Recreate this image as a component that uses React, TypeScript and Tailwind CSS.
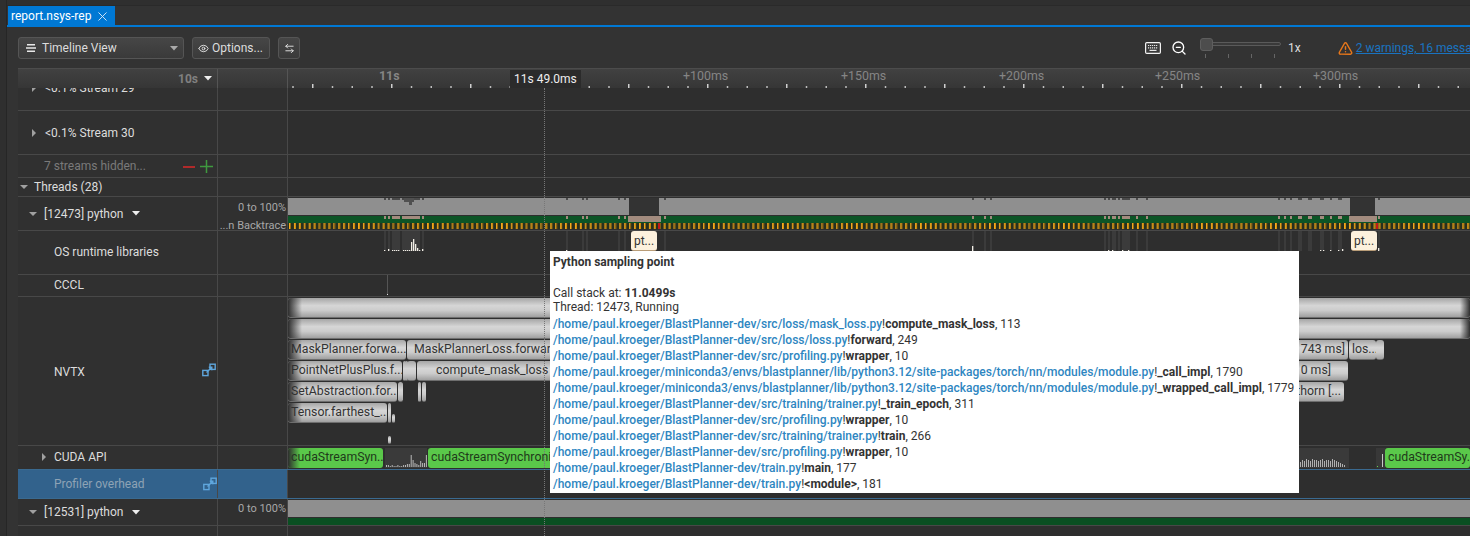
import React from "react";
import { ArrowLeftRight, Eye, TriangleAlert, X, ZoomOut } from "lucide-react";

const CW = 1182;

const marks = [
  [384, 2], [388, 2], [392, 8], [402, 18], [422, 2],
  [566, 2], [582, 2], [586, 2], [618, 2], [624, 2], [664, 2], [972, 2],
  [984, 2], [990, 2], [1104, 2], [1108, 2], [1112, 4], [1118, 2], [1122, 8], [1136, 2], [1146, 2],
  [1278, 2], [1284, 2], [1290, 2], [1298, 4], [1308, 4], [1320, 4], [1330, 2], [1338, 4], [1378, 2],
];
const notches = [[629, 30], [1350, 25]];

type Bar = {
  x: number;
  w: number;
  y: number;
  h?: number;
  text: string;
  fadeL?: boolean;
  fadeR?: boolean;
  indent?: number;
  right?: boolean;
  rightPad?: number;
};

const nvtxBars: Bar[] = [
  { x: 288, w: 1182, y: 1, text: "", fadeL: true, fadeR: true },
  { x: 288, w: 1182, y: 22, text: "", fadeL: true, fadeR: true },
  { x: 288, w: 118, y: 43, text: "MaskPlanner.forwa...", fadeL: true },
  { x: 407, w: 150, y: 43, text: "MaskPlannerLoss.forward", indent: 7 },
  { x: 1250, w: 98, y: 43, text: "743 ms]", right: true },
  { x: 1349, w: 27, y: 43, text: "los..." },
  { x: 1376, w: 8, y: 43, text: "" },
  { x: 288, w: 114, y: 64, text: "PointNetPlusPlus.f...", fadeL: true },
  { x: 403, w: 1, y: 64, text: "" },
  { x: 405, w: 1, y: 64, text: "" },
  { x: 407, w: 9, y: 64, text: "" },
  { x: 417, w: 136, y: 64, text: "compute_mask_loss", indent: 19 },
  { x: 1250, w: 98, y: 64, text: "0 ms]", right: true, rightPad: 17 },
  { x: 288, w: 109, y: 85, text: "SetAbstraction.for...", fadeL: true },
  { x: 398, w: 5, y: 85, text: "" },
  { x: 418, w: 3, y: 85, text: "" },
  { x: 422, w: 4, y: 85, text: "" },
  { x: 1250, w: 94, y: 85, text: "thorn [...", right: true },
  { x: 288, w: 99, y: 106, text: "Tensor.farthest_...", fadeL: true },
  { x: 388, w: 3, y: 106, text: "" },
  { x: 392, w: 3, y: 117, h: 9, text: "" },
  { x: 388, w: 3, y: 139, h: 8, text: "" },
];

const callStack = [
  ["/home/paul.kroeger/BlastPlanner-dev/src/loss/mask_loss.py", "compute_mask_loss", "113"],
  ["/home/paul.kroeger/BlastPlanner-dev/src/loss/loss.py", "forward", "249"],
  ["/home/paul.kroeger/BlastPlanner-dev/src/profiling.py", "wrapper", "10"],
  ["/home/paul.kroeger/miniconda3/envs/blastplanner/lib/python3.12/site-packages/torch/nn/modules/module.py", "_call_impl", "1790"],
  ["/home/paul.kroeger/miniconda3/envs/blastplanner/lib/python3.12/site-packages/torch/nn/modules/module.py", "_wrapped_call_impl", "1779"],
  ["/home/paul.kroeger/BlastPlanner-dev/src/training/trainer.py", "_train_epoch", "311"],
  ["/home/paul.kroeger/BlastPlanner-dev/src/profiling.py", "wrapper", "10"],
  ["/home/paul.kroeger/BlastPlanner-dev/src/training/trainer.py", "train", "266"],
  ["/home/paul.kroeger/BlastPlanner-dev/src/profiling.py", "wrapper", "10"],
  ["/home/paul.kroeger/BlastPlanner-dev/train.py", "main", "177"],
  ["/home/paul.kroeger/BlastPlanner-dev/train.py", "<module>", "181"],
];

const timeLabels = [
  { x: 379, t: "11s", bold: true },
  { x: 683, t: "+100ms" },
  { x: 841, t: "+150ms" },
  { x: 999, t: "+200ms" },
  { x: 1155, t: "+250ms" },
  { x: 1313, t: "+300ms" },
];

function Tri({ open, className }: { open?: boolean; className: string }) {
  return (
    <svg width="8" height="8" viewBox="0 0 8 8" className={className}>
      {open ? <path d="M0 2h8L4 6z" fill="#a0a0a0" /> : <path d="M2 0l4 4-4 4z" fill="#a0a0a0" />}
    </svg>
  );
}

function Caret() {
  return (
    <svg width="8" height="5" viewBox="0 0 8 5" className="shrink-0">
      <path d="M0 0h8L4 4.5z" fill="#eeeeee" />
    </svg>
  );
}

function ExpandIcon({ className }: { className: string }) {
  return (
    <svg width="14" height="14" viewBox="0 0 14 14" fill="none" stroke="#5fa6dc" strokeWidth="1.4" className={className}>
      <rect x="0.8" y="7.4" width="5.2" height="5.2" />
      <rect x="8" y="1.2" width="5.2" height="5.2" />
      <path d="M4.5 9.5L9.5 4.5M6.8 4.2h3v3" />
    </svg>
  );
}

function KeyboardIcon() {
  return (
    <svg width="16" height="12" viewBox="0 0 16 12" className="ml-[845px] shrink-0">
      <rect x="0.6" y="0.6" width="14.8" height="10.8" rx="1.2" fill="#3a3a3a" stroke="#f2f2f2" strokeWidth="1.2" />
      <path d="M3 3.5h10M3 5.8h10" stroke="#e8e8e8" strokeWidth="1.2" strokeDasharray="1.2 0.8" />
      <path d="M4.5 8.4h7" stroke="#e8e8e8" strokeWidth="1.2" />
    </svg>
  );
}

function Row({
  h,
  label,
  mid,
  canvas,
  selected,
  className = "",
}: {
  h: string;
  label?: React.ReactNode;
  mid?: React.ReactNode;
  canvas?: React.ReactNode;
  selected?: boolean;
  className?: string;
}) {
  return (
    <div className={`grid grid-cols-[200px_70px_1fr] grid-rows-[minmax(0,1fr)] shrink-0 border-b border-[#484848] ${h} ${className}`}>
      <div className={`relative flex items-center border-r border-[#484848] min-w-0 ${selected ? "bg-[#32628c]" : "bg-[#303030]"}`}>
        {label}
      </div>
      <div className={`relative flex flex-col items-end border-r border-[#484848] text-[11px] leading-[12px] text-[#a8a8a8] ${selected ? "bg-[#32628c]" : "bg-[#303030]"}`}>
        {mid}
      </div>
      <div className="relative bg-[#2e2e2e] overflow-hidden">{canvas}</div>
    </div>
  );
}

function ThreadCanvas({ withMarks }: { withMarks?: boolean }) {
  const ticks: number[] = [];
  for (let x = 289; x < 1470; x += 4.93) ticks.push(x);
  return (
    <svg width={CW} height="33" viewBox="288 0 1182 33" className="block">
      <rect x="288" y="1" width="1182" height="17" fill="#8f8f8f" />
      <rect x="288" y="19" width="1182" height="7" fill={withMarks ? "#0c5526" : "#0a4f22"} />
      {withMarks &&
        marks.map(([x, w]) => (
          <g key={x}>
            <rect x={x} y="1" width={w} height="2" fill="#4a4a4a" />
            <rect x={x} y="19" width={w} height="3" fill="#a28b7e" />
          </g>
        ))}
      {withMarks && (
        <>
          <path d="M404 1h10v4h-2v3h-3v-3h-5z" fill="#505050" />
          <rect x="402" y="21" width="18" height="1" fill="#a28b7e" />
        </>
      )}
      {withMarks &&
        notches.map(([x, w]) => (
          <g key={x}>
            <rect x={x} y="1" width={w} height="17" fill="#333333" />
            <rect x={x - 1} y="19" width={w + 3} height="6" fill="#a28b7e" />
          </g>
        ))}
      {withMarks && <rect x="288" y="26" width="1182" height="6" fill="#27301f" />}
      {withMarks &&
        ticks.map((x, i) => (
          <g key={i}>
            <rect x={x} y="26" width="1" height="6" fill="#f7ad20" />
            <rect x={x + 1} y="26" width="1" height="6" fill={i % 3 === 0 ? "#9c6c12" : "#d8930f"} />
          </g>
        ))}
      {withMarks && <rect x="658" y="26" width="2" height="6" fill="#c01818" />}
      {withMarks && <rect x="1376" y="26" width="2" height="6" fill="#c01818" />}
    </svg>
  );
}

function OsCanvas() {
  const spikes = [
    [384, 1], [388, 2], [392, 1], [394, 1], [396, 1], [398, 1], [403, 1], [405, 1], [407, 1], [409, 1],
    [411, 9], [413, 12], [415, 7], [417, 3], [419, 1], [422, 2], [566, 1], [1108, 1], [1112, 1], [1122, 1], [1128, 1],
    [972, 5], [1378, 3], [1330, 1], [1320, 1], [1323, 1], [1338, 1], [1342, 2],
  ];
  return (
    <>
      <svg width={CW} height="20" viewBox="288 0 1182 20" className="block">
        {marks.map(([x, w]) => (
          <rect key={x} x={x} y="0" width={w} height="20" fill="#3b3b3b" />
        ))}
        <rect x="402" y="0" width="18" height="20" fill="#3b3b3b" />
        {spikes.map(([x, h]) => (
          <rect key={x} x={x} y={20 - h} width="1.3" height={h} fill="#f2eee6" />
        ))}
      </svg>
      {[343, 1063].map((x) => (
        <div
          key={x}
          className="absolute top-0 w-[26px] h-[20px] rounded-[3px] bg-[#fdf1dd] text-[12px] leading-[20px] text-center text-[#333] border-b border-[#b99d78]"
          style={{ left: x }}
        >
          pt...
        </div>
      ))}
    </>
  );
}

function NvtxCanvas() {
  return (
    <>
      {nvtxBars.map((b, i) => (
        <div
          key={i}
          className="absolute h-[20px] rounded-[3px] overflow-hidden border-b border-[#6e6e6e] bg-[linear-gradient(180deg,#a6a6a6,#d6d6d6_40%,#cccccc_65%,#a0a0a0)] text-[12.3px] leading-[19px] text-[#333] whitespace-nowrap"
          style={{
            left: b.x - 288,
            top: b.y,
            width: b.w,
            height: b.h,
            paddingLeft: b.right ? 0 : b.indent ?? 3,
            paddingRight: b.right ? b.rightPad ?? 3 : 0,
            textAlign: b.right ? "right" : "left",
          }}
        >
          {b.text}
          {b.fadeL && <div className="absolute left-0 top-0 bottom-0 w-[14px] bg-gradient-to-r from-[#2e2e2e] to-transparent" />}
          {b.fadeR && <div className="absolute right-0 top-0 bottom-0 w-[10px] bg-gradient-to-l from-[#2e2e2e] to-transparent" />}
        </div>
      ))}
    </>
  );
}

function CudaCanvas() {
  const left = [2, 2, 1, 2, 1, 1, 2, 1, 1, 2, 2, 3, 3, 12, 7, 4, 3, 2, 6, 4, 4, 12];
  const right = [5, 7, 6, 8, 7, 6, 8, 7, 7, 6, 7, 8, 6, 7, 7, 6, 8, 7, 6, 5, 4, 3, 2];
  const green = [
    { x: 288, w: 95, t: "cudaStreamSyn..." },
    { x: 428, w: 130, t: "cudaStreamSynchroni" },
    { x: 1385, w: 85, t: "cudaStreamSy.." },
  ];
  return (
    <>
      <svg width={CW} height="23" viewBox="288 0 1182 23" className="block absolute left-0 top-0">
        <rect x="385" y="2" width="42" height="20" fill="#3a3a3a" />
        {left.map((h, i) => (
          <rect key={i} x={386 + i * 1.9} y={21 - h} width="1" height={h} fill="#b8b8b8" />
        ))}
        <rect x="1299" y="2" width="50" height="20" fill="#3a3a3a" />
        {right.map((h, i) => (
          <rect key={i} x={1300 + i * 2} y={21 - h} width="1" height={h} fill="#b0b0b0" />
        ))}
        <rect x="1376" y="2" width="9" height="20" fill="#383838" />
        <rect x="1382" y="8" width="1" height="13" fill="#c8c8c8" />
        <rect x="1377" y="20" width="1" height="1" fill="#62d24e" />
      </svg>
      {green.map((g) => (
        <div
          key={g.x}
          className="absolute top-[2px] h-[20px] rounded-[3px] overflow-hidden pl-[3px] bg-[#5ac84a] text-[12.3px] leading-[19px] text-[#1f3a1a] whitespace-nowrap"
          style={{ left: g.x - 288, width: g.w }}
        >
          {g.t}
          {g.x === 288 && <div className="absolute left-0 top-0 bottom-0 w-[12px] bg-gradient-to-r from-[#2e2e2e] to-transparent" />}
        </div>
      ))}
    </>
  );
}

function Ruler() {
  const ticks = [];
  for (let i = 0; i < 60; i++) {
    const x = 292.25 + i * 19.75;
    const big = (i - 1) % 4 === 0;
    ticks.push(<rect key={i} x={x} y={big ? 15 : 17} width="1.5" height={big ? 5 : 3} fill={big ? "#cfcfcf" : "#bdbdbd"} />);
  }
  return (
    <svg width={CW} height="20" viewBox="288 0 1182 20" className="absolute left-0 top-0">
      {ticks}
    </svg>
  );
}

function Tooltip() {
  return (
    <div className="absolute left-[550px] top-[251px] w-[749px] h-[242px] bg-white pt-[4px] px-[3px] text-[12px] leading-[15px] text-[#333] whitespace-nowrap overflow-hidden">
      <div className="font-bold">Python sampling point</div>
      <div className="h-[16px]" />
      <div>
        Call stack at: <b>11.0499s</b>
      </div>
      <div className="-mt-px mb-px">Thread: 12473, Running</div>
      {callStack.map((f, i) => (
        <div key={i} className="leading-[16px]">
          <span className="text-[#2e86c1] font-medium">{f[0]}</span>!<b>{f[1]}</b>, {f[2]}
        </div>
      ))}
    </div>
  );
}

export default function App() {
  return (
    <div className="relative w-[1470px] h-[536px] overflow-hidden flex bg-[#333333] font-['Roboto',sans-serif] text-[12px] text-[#dddddd]">
      <div className="w-[7px] shrink-0 bg-[#2f2f2f] border-r border-[#262626]" />
      <div className="flex-1 min-w-0 flex flex-col">
        <div className="h-[6px] shrink-0 border-b border-[#2a2a2a] bg-[#2f2f2f]" />
        <div className="h-[21px] shrink-0 border-b-2 border-[#0078d4] pl-px flex">
          <div className="w-[107px] h-[20px] bg-[#0078d4] flex items-center pl-[3px] gap-[4px] text-white">
            report.nsys-rep
            <X size={15} strokeWidth={1.5} className="text-[#d9e9f7]" />
          </div>
        </div>
        <div className="h-[41px] shrink-0 flex items-center pt-[1px] pl-[11px] whitespace-nowrap overflow-hidden">
          <div className="w-[166px] h-[22px] shrink-0 flex items-center pl-[7px] pr-[5px] rounded-[3px] border border-[#555] bg-gradient-to-b from-[#464646] to-[#3a3a3a]">
            <svg width="10" height="8" viewBox="0 0 10 8" className="mr-[6px]">
              <path d="M1 0h8v1.5H1zM0 3.2h10v1.5H0zM1 6.4h8V8H1z" fill="#e8e8e8" />
            </svg>
            Timeline View
            <svg width="8" height="5" viewBox="0 0 8 5" className="ml-auto">
              <path d="M0 0h8L4 4.5z" fill="#aaaaaa" />
            </svg>
          </div>
          <div className="ml-[8px] w-[78px] h-[22px] shrink-0 flex items-center pl-[5px] gap-[3px] rounded-[3px] border border-[#555] bg-gradient-to-b from-[#464646] to-[#3a3a3a]">
            <Eye size={11} strokeWidth={2} className="text-[#e8e8e8]" />
            Options...
          </div>
          <div className="ml-[8px] w-[22px] h-[22px] shrink-0 flex items-center justify-center rounded-[3px] border border-[#555] bg-gradient-to-b from-[#464646] to-[#3a3a3a]">
            <ArrowLeftRight size={11} strokeWidth={2} className="text-[#e8e8e8]" />
          </div>
          <KeyboardIcon />
          <ZoomOut size={16} strokeWidth={2} className="ml-[10px] shrink-0 text-white" />
          <div className="ml-[13px] w-[81px] h-[24px] shrink-0 relative">
            <div className="absolute left-[10px] top-[6px] w-[71px] h-[4px] rounded-full border border-[#5a5a5a] bg-[#3a3a3a]" />
            <div className="absolute left-0 top-[2px] w-[13px] h-[13px] rounded-[3px] bg-[#4d4d4d] border border-[#5e5e5e]" />
            <div className="absolute left-[5px] right-0 top-[18px] h-[4px] flex justify-between pr-[6px]">
              <span className="w-px bg-[#666]" />
              <span className="w-px bg-[#666]" />
              <span className="w-px bg-[#666]" />
              <span className="w-px bg-[#666]" />
            </div>
          </div>
          <span className="ml-[7px] shrink-0">1x</span>
          <TriangleAlert size={15} strokeWidth={2.4} className="ml-[37px] shrink-0 text-[#e8771a]" />
          <a className="ml-[3px] shrink-0 text-[#1a73c0] underline">2 warnings, 16 messages</a>
        </div>

        <div className="flex-1 min-h-0 ml-[11px] flex flex-col overflow-hidden relative">
          <div className="h-[20px] shrink-0 grid grid-cols-[200px_70px_1fr] bg-gradient-to-b from-[#414141] to-[#363636] border-t border-[#4c4c4c]">
            <div className="border-r border-[#555] flex items-center justify-end pr-[5px] gap-[6px] text-[#808080] font-bold">
              10s
              <Caret />
            </div>
            <div className="border-r border-[#555]" />
            <div className="relative">
              <Ruler />
              {timeLabels.map((l) => (
                <span
                  key={l.x}
                  className={`absolute top-[-1px] text-[12.4px] leading-[16px] text-[#858585] ${l.bold ? "font-bold" : ""}`}
                  style={{ left: l.x - 288 }}
                >
                  {l.t}
                </span>
              ))}
              <span className="absolute left-[222px] top-[1px] h-[18px] px-[4px] bg-[#2b2b2b] text-[#eeeeee] leading-[18px]">11s 49.0ms</span>
            </div>
          </div>

          <div className="flex-1 min-h-0 flex flex-col overflow-hidden relative">
            <Row
              h="h-[45px] -mt-[22px]"
              label={
                <>
                  <Tri className="ml-[12px] mr-[7px]" />
                  &lt;0.1% Stream 29
                </>
              }
            />
            <Row
              h="h-[44px]"
              label={
                <>
                  <Tri className="ml-[12px] mr-[7px]" />
                  &lt;0.1% Stream 30
                </>
              }
            />
            <Row
              h="h-[23px]"
              label={
                <>
                  <span className="ml-[26px] text-[#7a7a7a]">7 streams hidden...</span>
                  <span className="absolute left-[165px] top-[11px] w-[12px] h-[1.5px] bg-[#b02a2a]" />
                  <svg width="13" height="13" viewBox="0 0 13 13" className="absolute left-[182px] top-[5px]">
                    <path d="M6.5 0v13M0 6.5h13" stroke="#3f9a3f" strokeWidth="1.5" />
                  </svg>
                </>
              }
            />
            <Row
              h="h-[19px]"
              label={
                <>
                  <Tri open className="ml-[2px] mr-[6px] w-[8px]" />
                  Threads (28)
                </>
              }
            />
            <Row
              h="h-[34px]"
              label={
                <>
                  <Tri open className="ml-[11px] mr-[7px]" />
                  <span className="mr-[9px]">[12473] python</span>
                  <Caret />
                </>
              }
              mid={
                <>
                  <span className="pr-[1px] pt-[5px]">0 to 100%</span>
                  <span className="pr-[1px] mt-[6px] whitespace-nowrap">...n Backtrace</span>
                </>
              }
              canvas={<ThreadCanvas withMarks />}
            />
            <Row h="h-[44px]" label={<span className="ml-[36px] mb-[2px]">OS runtime libraries</span>} canvas={<OsCanvas />} />
            <Row
              h="h-[22px]"
              label={<span className="ml-[36px] mb-[2px]">CCCL</span>}
              canvas={
                <>
                  <div className="absolute left-[99px] top-0 w-px h-[19px] bg-[#555]" />
                  <div className="absolute left-[99px] top-[19px] w-px h-px bg-[#ddd]" />
                </>
              }
            />
            <Row
              h="h-[149px]"
              label={
                <>
                  <span className="ml-[36px] mt-[1px]">NVTX</span>
                  <ExpandIcon className="absolute left-[184px] top-[66px]" />
                </>
              }
              canvas={<NvtxCanvas />}
            />
            <Row
              h="h-[24px]"
              className="!border-[#3a6a90]"
              label={
                <>
                  <Tri className="ml-[22px] mr-[6px] mb-[2px]" />
                  <span className="mb-[2px]">CUDA API</span>
                </>
              }
              canvas={<CudaCanvas />}
            />
            <Row
              h="h-[29px]"
              selected
              className="!border-[#3a6a90]"
              label={
                <>
                  <span className="ml-[36px] text-[#8ea3b5]">Profiler overhead</span>
                  <ExpandIcon className="absolute left-[185px] top-[7px]" />
                </>
              }
            />
            <Row
              h="h-[27px]"
              label={
                <>
                  <Tri open className="ml-[11px] mr-[7px]" />
                  <span className="mr-[9px]">[12531] python</span>
                  <Caret />
                </>
              }
              mid={<span className="pr-[1px] pt-[4px]">0 to 100%</span>}
              canvas={<ThreadCanvas />}
            />
            <Row h="h-[44px]" label={<span className="ml-[36px]">OS runtime libraries</span>} />
            <div className="absolute left-[526px] top-0 bottom-0 border-l border-dotted border-[#777]" />
          </div>
        </div>
      </div>
      <Tooltip />
    </div>
  );
}
